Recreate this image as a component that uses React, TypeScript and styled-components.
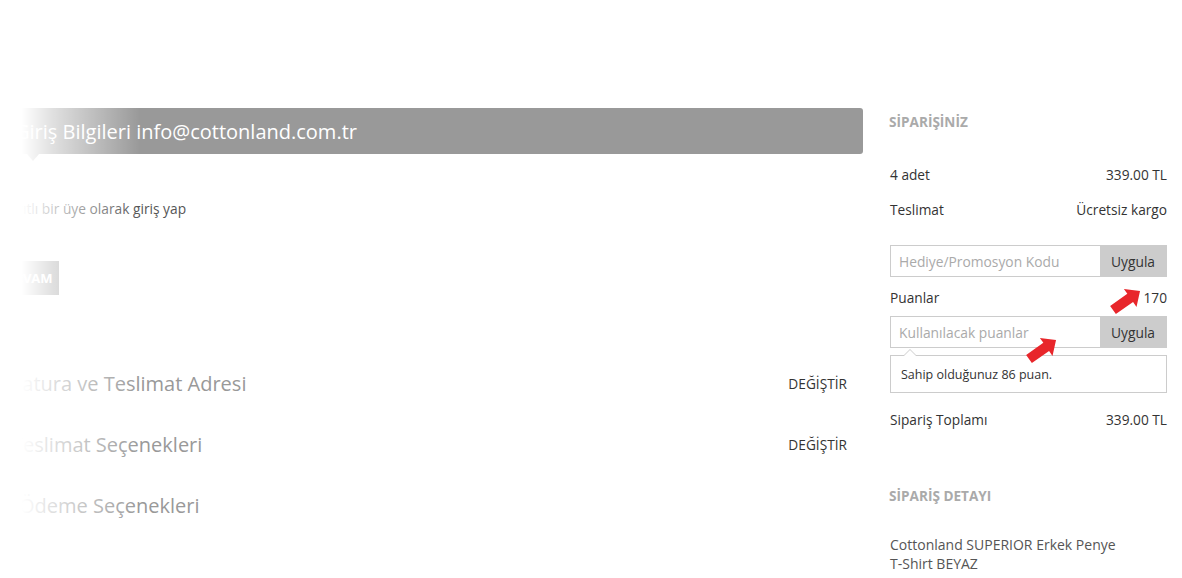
import React from 'react';
import styled, { createGlobalStyle } from 'styled-components';

const GlobalStyle = createGlobalStyle`
  html, body {
    margin: 0;
    padding: 0;
    background: #fff;
  }
  body {
    font-family: "Open Sans", "Liberation Sans", Arial, sans-serif;
    color: #333;
  }
  * {
    box-sizing: border-box;
  }
`;

const Page = styled.div`
  position: relative;
  display: flex;
  align-items: flex-start;
  width: 1182px;
  height: 578px;
  padding-top: 108px;
  overflow: hidden;
`;

const LeftCol = styled.div`
  position: relative;
  width: 863px;
  flex-shrink: 0;
`;

// white veil over the left edge of the checkout steps
const Fade = styled.div`
  position: absolute;
  top: 0;
  left: 0;
  bottom: 0;
  width: 140px;
  pointer-events: none;
  background: linear-gradient(
    to right,
    #fff 0px,
    #fff 22px,
    rgba(255, 255, 255, 0.7) 52px,
    rgba(255, 255, 255, 0) 140px
  );
`;

const StepBar = styled.div`
  position: relative;
  display: flex;
  align-items: center;
  height: 46px;
  padding-left: 15px;
  background: #999;
  border-radius: 0 3px 3px 0;
  color: #fff;
  font-size: 20px;

  &::after {
    content: "";
    position: absolute;
    left: 27px;
    bottom: -7px;
    border-left: 6px solid transparent;
    border-right: 6px solid transparent;
    border-top: 7px solid #999;
  }
`;

const LoginLine = styled.p`
  margin: 46px 0 0;
  font-size: 13.75px;
  line-height: 18px;
  color: #555;
`;

const ContinueButton = styled.button`
  display: block;
  height: 34px;
  margin-top: 43px;
  padding: 0 6px;
  border: none;
  background: #999;
  color: #fff;
  font-family: inherit;
  font-size: 13px;
  font-weight: 700;
`;

const Steps = styled.div`
  margin-top: 58px;
`;

const StepRow = styled.div<{ $indent?: number }>`
  display: flex;
  align-items: center;
  justify-content: space-between;
  height: 61px;
  padding: 0 16px 0 ${p => p.$indent ?? 12}px;
`;

const StepTitle = styled.span`
  font-size: 20px;
  color: #999;
`;

const ChangeLink = styled.a`
  font-size: 13.7px;
  color: #333;
  text-decoration: none;
`;

const RightCol = styled.div`
  width: 277px;
  margin-left: 27px;
  flex-shrink: 0;
`;

const SectionTitle = styled.h3<{ $gap?: number }>`
  margin: ${p => p.$gap ?? 0}px 0 0 -1px;
  height: 28px;
  line-height: 28px;
  font-size: 13.6px;
  font-weight: 700;
  color: #aaa;
`;

const SummaryRow = styled.div<{ $gap?: number }>`
  display: flex;
  justify-content: space-between;
  align-items: center;
  height: 35px;
  margin-top: ${p => p.$gap ?? 0}px;
  font-size: 13.7px;
  color: #333;
`;

const InputGroup = styled.div<{ $gap?: number }>`
  display: flex;
  height: 32px;
  margin-top: ${p => p.$gap ?? 0}px;
  border: 1px solid #ccc;
`;

const TextInput = styled.input`
  flex: 1;
  min-width: 0;
  border: none;
  padding: 0 8px;
  font-family: inherit;
  font-size: 13.8px;
  color: #333;
  outline: none;

  &::placeholder {
    color: #aaa;
  }
`;

const ApplyButton = styled.button`
  width: 66px;
  border: none;
  background: #ccc;
  color: #333;
  font-family: inherit;
  font-size: 13.8px;
`;

const Hint = styled.div`
  position: relative;
  display: flex;
  align-items: center;
  height: 38px;
  margin-top: 7px;
  padding-left: 10px;
  border: 1px solid #ccc;
  font-size: 12.5px;
  color: #333;

  &::before,
  &::after {
    content: "";
    position: absolute;
    left: 12px;
    border-left: 7px solid transparent;
    border-right: 7px solid transparent;
  }
  &::before {
    top: -7px;
    border-bottom: 7px solid #ccc;
  }
  &::after {
    top: -6px;
    border-bottom: 7px solid #fff;
  }
`;

const ProductName = styled.p`
  margin: 25px 0 0;
  font-size: 14px;
  line-height: 19px;
  color: #555;
`;

const Marker = styled.svg<{ $x: number; $y: number }>`
  position: absolute;
  left: ${p => p.$x}px;
  top: ${p => p.$y}px;
  width: 40px;
  height: 30px;
  overflow: visible;
`;

const RedArrow = ({ x, y }: { x: number; y: number }) => (
  <Marker $x={x} $y={y} viewBox="0 0 40 30">
    <polygon
      points="0,5 21,5 21,-1 33,10 21,21 21,15 0,15"
      transform="translate(3,22) rotate(-35) translate(0,-10)"
      fill="#e8262b"
    />
  </Marker>
);

const App = () => {
  return (
    <>
      <GlobalStyle />
      <Page>
        <LeftCol>
          <StepBar>Giriş Bilgileri info@cottonland.com.tr</StepBar>
          <LoginLine>Kayıtlı bir üye olarak giriş yap</LoginLine>
          <ContinueButton>DEVAM</ContinueButton>
          <Steps>
            <StepRow>
              <StepTitle>Fatura ve Teslimat Adresi</StepTitle>
              <ChangeLink href="#">DEĞİŞTİR</ChangeLink>
            </StepRow>
            <StepRow>
              <StepTitle>Teslimat Seçenekleri</StepTitle>
              <ChangeLink href="#">DEĞİŞTİR</ChangeLink>
            </StepRow>
            <StepRow $indent={19}>
              <StepTitle>Ödeme Seçenekleri</StepTitle>
            </StepRow>
          </Steps>
          <Fade />
        </LeftCol>

        <RightCol>
          <SectionTitle>SİPARİŞİNİZ</SectionTitle>
          <SummaryRow $gap={21}>
            <span>4 adet</span>
            <span>339.00 TL</span>
          </SummaryRow>
          <SummaryRow>
            <span>Teslimat</span>
            <span>Ücretsiz kargo</span>
          </SummaryRow>
          <InputGroup $gap={18}>
            <TextInput placeholder="Hediye/Promosyon Kodu" />
            <ApplyButton>Uygula</ApplyButton>
          </InputGroup>
          <SummaryRow $gap={3}>
            <span>Puanlar</span>
            <span>170</span>
          </SummaryRow>
          <InputGroup $gap={1}>
            <TextInput placeholder="Kullanılacak puanlar" />
            <ApplyButton>Uygula</ApplyButton>
          </InputGroup>
          <Hint>Sahip olduğunuz 86 puan.</Hint>
          <SummaryRow $gap={9}>
            <span>Sipariş Toplamı</span>
            <span>339.00 TL</span>
          </SummaryRow>
          <SectionTitle $gap={45}>SİPARİŞ DETAYI</SectionTitle>
          <ProductName>
            Cottonland SUPERIOR Erkek Penye
            <br />
            T-Shirt BEYAZ
          </ProductName>
        </RightCol>

        <RedArrow x={1110} y={288} />
        <RedArrow x={1026} y={337} />
      </Page>
    </>
  );
};

export default App;
